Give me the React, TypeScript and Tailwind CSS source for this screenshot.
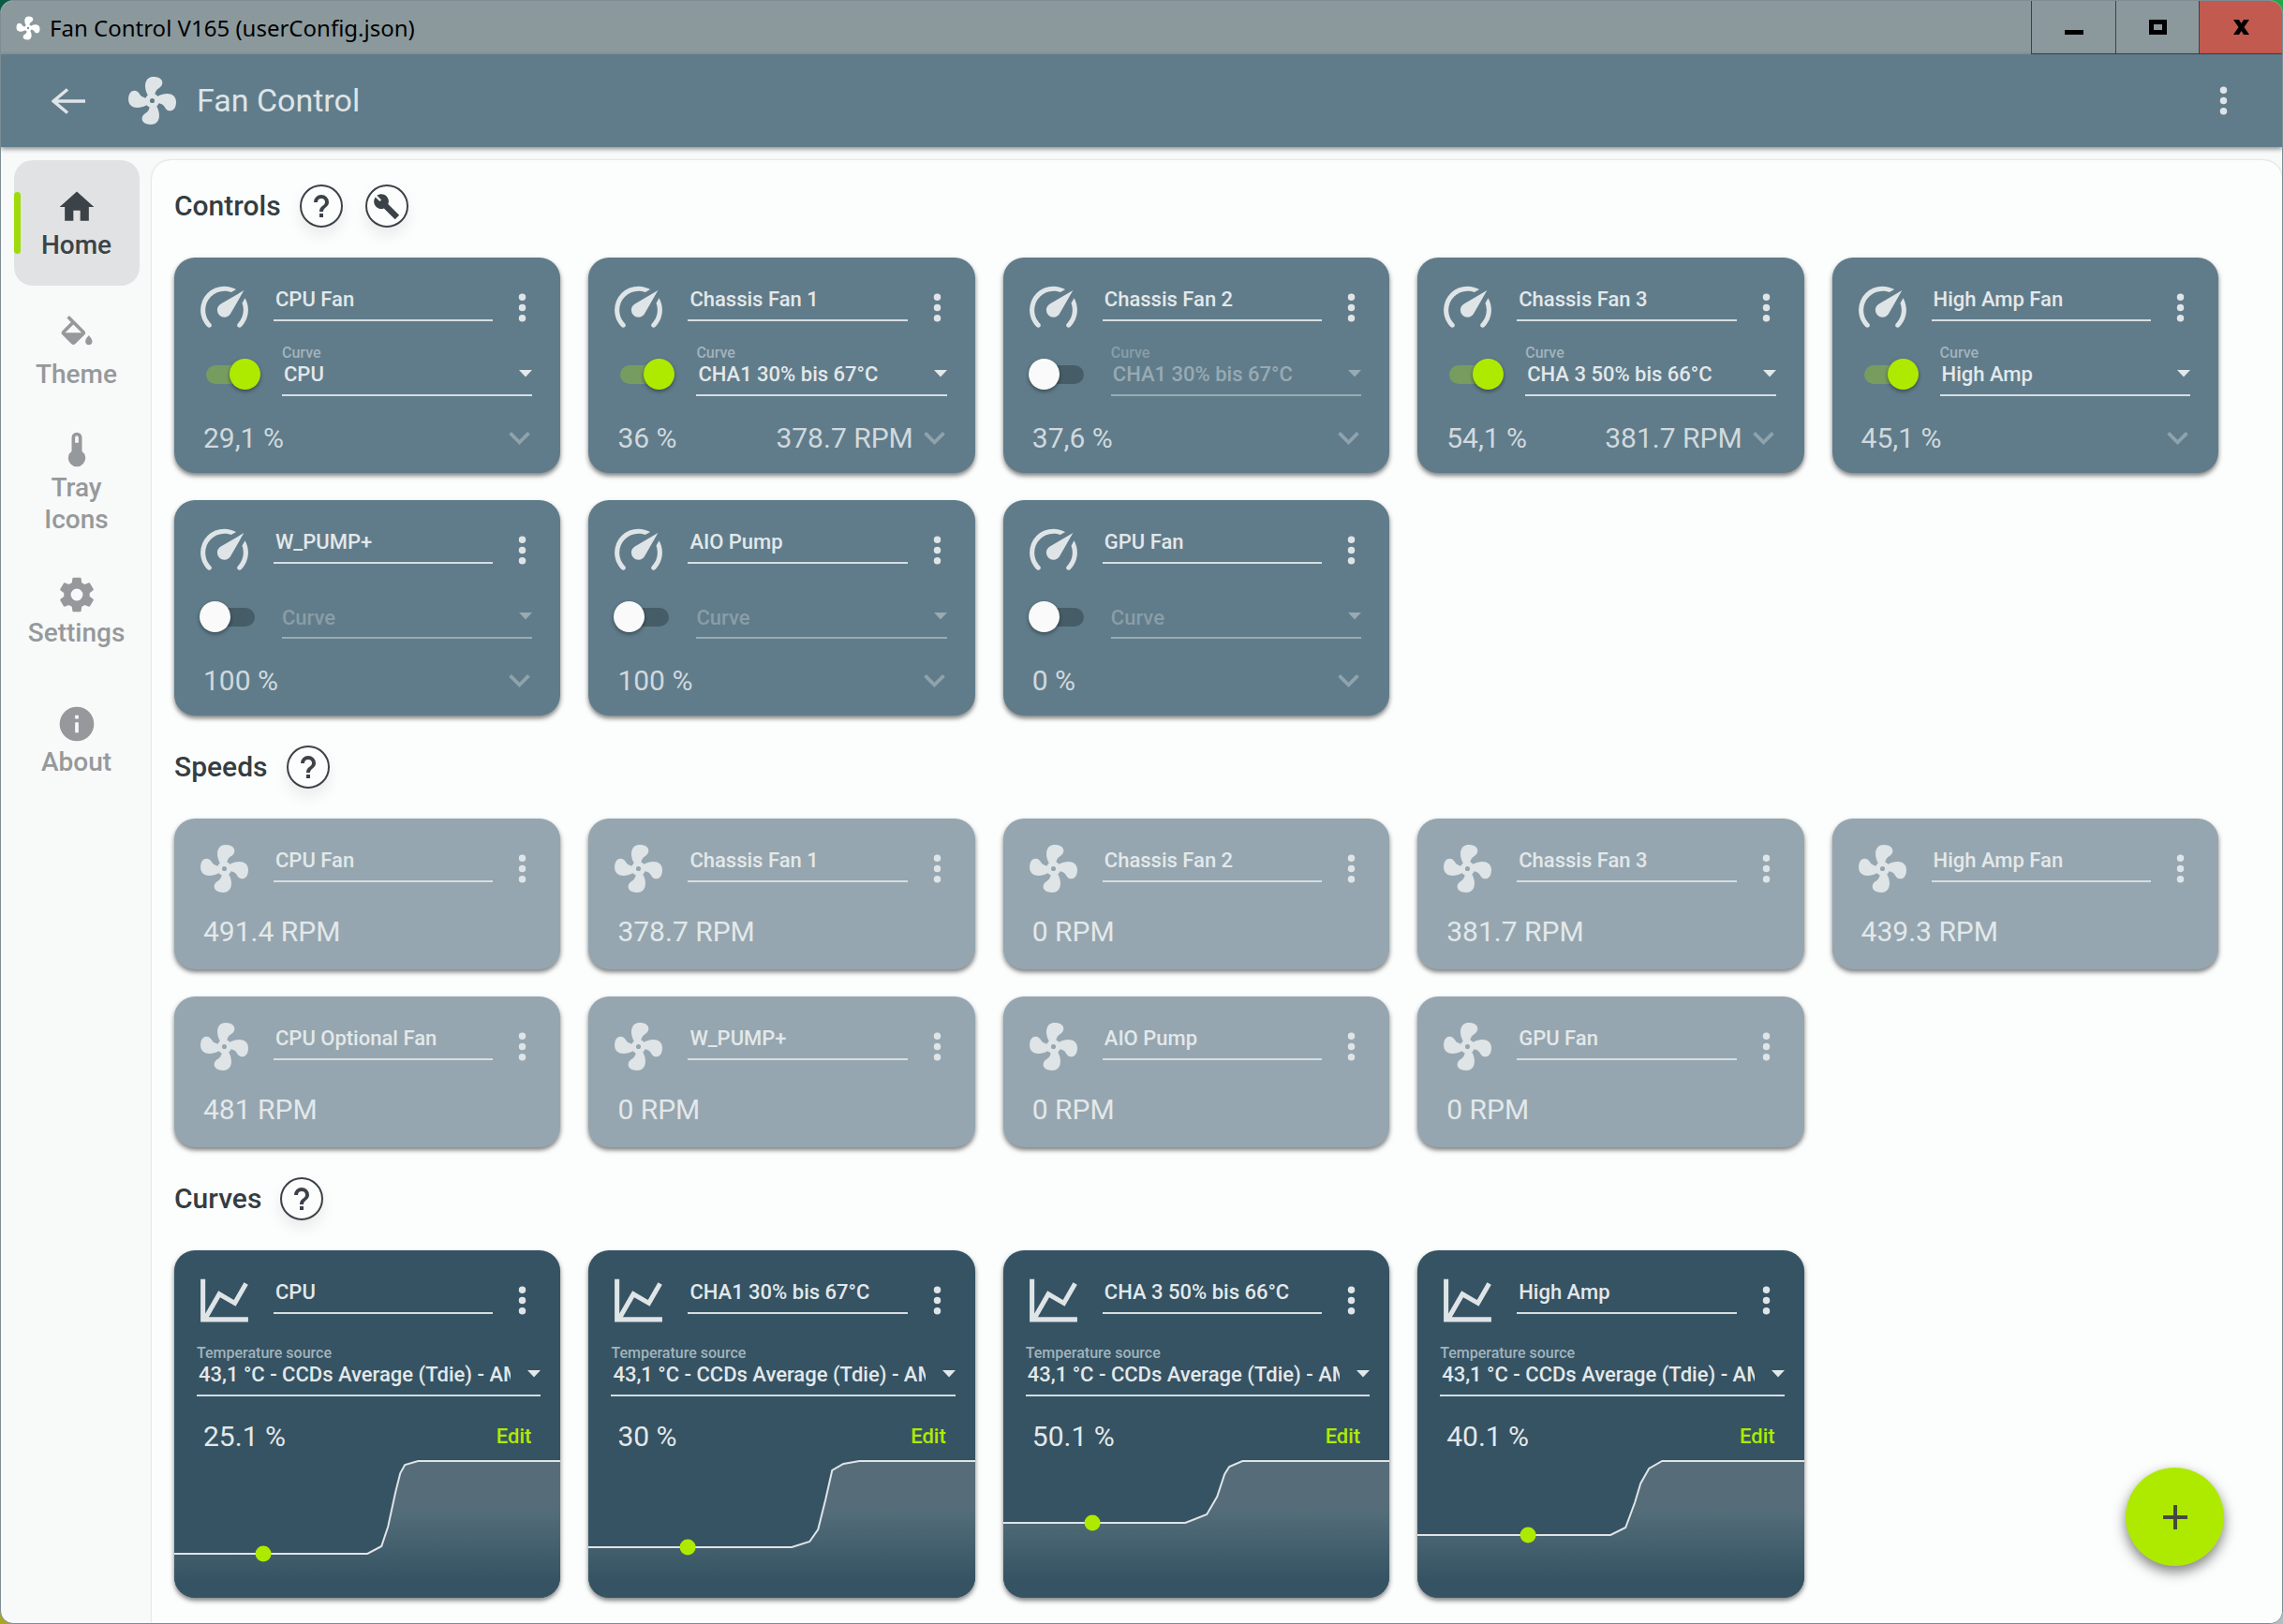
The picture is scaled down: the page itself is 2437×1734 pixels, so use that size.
import { useId, useState } from 'react';
import type { ReactNode } from 'react';
import { clsx } from 'clsx';

const ICONS = {
  home: 'M10,20V14H14V20H19V12H22L12,3L2,12H5V20H10Z',
  fill: 'M19,11.5C19,11.5 17,13.67 17,15A2,2 0 0,0 19,17A2,2 0 0,0 21,15C21,13.67 19,11.5 19,11.5M5.21,10L10,5.21L14.79,10M16.56,8.94L7.62,0L6.21,1.41L8.59,3.79L3.44,8.94C2.85,9.5 2.85,10.47 3.44,11.06L8.94,16.56C9.23,16.85 9.62,17 10,17C10.38,17 10.77,16.85 11.06,16.56L16.56,11.06C17.15,10.47 17.15,9.5 16.56,8.94Z',
  thermometer: 'M15 13V5A3 3 0 0 0 9 5V13A5 5 0 1 0 15 13M12 4A1 1 0 0 1 13 5V8H11V5A1 1 0 0 1 12 4Z',
  cog: 'M12,15.5A3.5,3.5 0 0,1 8.5,12A3.5,3.5 0 0,1 12,8.5A3.5,3.5 0 0,1 15.5,12A3.5,3.5 0 0,1 12,15.5M19.43,12.97C19.47,12.65 19.5,12.33 19.5,12C19.5,11.67 19.47,11.34 19.43,11L21.54,9.37C21.73,9.22 21.78,8.95 21.66,8.73L19.66,5.27C19.54,5.05 19.27,4.96 19.05,5.05L16.56,6.05C16.04,5.66 15.5,5.32 14.87,5.07L14.5,2.42C14.46,2.18 14.25,2 14,2H10C9.75,2 9.54,2.18 9.5,2.42L9.13,5.07C8.5,5.32 7.96,5.66 7.44,6.05L4.95,5.05C4.73,4.96 4.46,5.05 4.34,5.27L2.34,8.73C2.21,8.95 2.27,9.22 2.46,9.37L4.57,11C4.53,11.34 4.5,11.67 4.5,12C4.5,12.33 4.53,12.65 4.57,12.97L2.46,14.63C2.27,14.78 2.21,15.05 2.34,15.27L4.34,18.73C4.46,18.95 4.73,19.03 4.95,18.95L7.44,17.94C7.96,18.34 8.5,18.68 9.13,18.93L9.5,21.58C9.54,21.82 9.75,22 10,22H14C14.25,22 14.46,21.82 14.5,21.58L14.87,18.93C15.5,18.67 16.04,18.34 16.56,17.94L19.05,18.95C19.27,19.03 19.54,18.95 19.66,18.73L21.66,15.27C21.78,15.05 21.73,14.78 21.54,14.63L19.43,12.97Z',
  info: 'M13,9H11V7H13M13,17H11V11H13M12,2A10,10 0 0,0 2,12A10,10 0 0,0 12,22A10,10 0 0,0 22,12A10,10 0 0,0 12,2Z',
  gauge: 'M12,16A3,3 0 0,1 9,13C9,11.88 9.61,10.9 10.5,10.39L20.21,4.77L14.68,14.35C14.18,15.33 13.17,16 12,16M12,3C13.81,3 15.5,3.5 16.97,4.32L14.87,5.53C14,5.19 13,5 12,5A8,8 0 0,0 4,13C4,15.21 4.89,17.21 6.34,18.65H6.35C6.74,19.04 6.74,19.67 6.35,20.06C5.96,20.45 5.32,20.45 4.93,20.07V20.07C3.12,18.26 2,15.76 2,13A10,10 0 0,1 12,3M22,13C22,15.76 20.88,18.26 19.07,20.07V20.07C18.68,20.45 18.05,20.45 17.66,20.06C17.27,19.67 17.27,19.04 17.66,18.65V18.65C19.11,17.2 20,15.21 20,13C20,12 19.81,11 19.46,10.1L20.67,8C21.5,9.5 22,11.18 22,13Z',
  fan: 'M12,11A1,1 0 0,0 11,12A1,1 0 0,0 12,13A1,1 0 0,0 13,12A1,1 0 0,0 12,11M12.5,2C17,2 17.11,5.57 14.75,6.75C13.76,7.24 13.32,8.29 13.13,9.22C13.61,9.42 14.03,9.73 14.35,10.13C18.05,8.13 22.03,8.92 22.03,12.5C22.03,17 18.46,17.1 17.28,14.73C16.78,13.74 15.72,13.3 14.79,13.11C14.59,13.59 14.28,14 13.88,14.34C15.87,18.03 15.08,22 11.5,22C7,22 6.91,18.42 9.27,17.24C10.25,16.75 10.69,15.71 10.89,14.79C10.4,14.59 9.97,14.27 9.65,13.87C5.96,15.85 2,15.07 2,11.5C2,7 5.56,6.89 6.74,9.26C7.24,10.25 8.29,10.68 9.22,10.87C9.41,10.39 9.73,9.97 10.14,9.65C8.15,5.96 8.94,2 12.5,2Z',
  chart: 'M16,11.78L20.24,4.45L21.97,5.45L16.74,14.5L10.23,10.75L5.46,19H22V21H2V3H4V17.54L9.5,8L16,11.78Z',
  dots: 'M12,16A2,2 0 0,1 14,18A2,2 0 0,1 12,20A2,2 0 0,1 10,18A2,2 0 0,1 12,16M12,10A2,2 0 0,1 14,12A2,2 0 0,1 12,14A2,2 0 0,1 10,12A2,2 0 0,1 12,10M12,4A2,2 0 0,1 14,6A2,2 0 0,1 12,8A2,2 0 0,1 10,6A2,2 0 0,1 12,4Z',
  chevron: 'M7.41,8.58L12,13.17L16.59,8.58L18,10L12,16L6,10L7.41,8.58Z',
  help: 'M11,18H13V16H11V18M12,6A4,4 0 0,0 8,10H10A2,2 0 0,1 12,8A2,2 0 0,1 14,10C14,12 11,11.75 11,15H13C13,12.75 16,12.5 16,10A4,4 0 0,0 12,6Z',
  wrench: 'M23.3,19.7L13.53,9.91C14.46,7.57 14,4.81 12.09,2.91C9.79,0.61 6.21,0.4 3.66,2.26L7.5,6.11L6.08,7.52L2.25,3.69C0.39,6.23 0.6,9.82 2.9,12.11C4.76,13.97 7.47,14.46 9.79,13.59L19.6,23.4Z',
};

type IconName = keyof typeof ICONS;

const NAV: { label: string; icon: IconName }[] = [
  { label: 'Home', icon: 'home' },
  { label: 'Theme', icon: 'fill' },
  { label: 'Tray Icons', icon: 'thermometer' },
  { label: 'Settings', icon: 'cog' },
  { label: 'About', icon: 'info' },
];

type Control = { name: string; curve?: string; on: boolean; percent: string; rpm?: string };

const CONTROLS: Control[] = [
  { name: 'CPU Fan', curve: 'CPU', on: true, percent: '29,1 %' },
  { name: 'Chassis Fan 1', curve: 'CHA1 30% bis 67°C', on: true, percent: '36 %', rpm: '378.7 RPM' },
  { name: 'Chassis Fan 2', curve: 'CHA1 30% bis 67°C', on: false, percent: '37,6 %' },
  { name: 'Chassis Fan 3', curve: 'CHA 3 50% bis 66°C', on: true, percent: '54,1 %', rpm: '381.7 RPM' },
  { name: 'High Amp Fan', curve: 'High Amp', on: true, percent: '45,1 %' },
  { name: 'W_PUMP+', on: false, percent: '100 %' },
  { name: 'AIO Pump', on: false, percent: '100 %' },
  { name: 'GPU Fan', on: false, percent: '0 %' },
];

const SPEEDS = [
  { name: 'CPU Fan', rpm: '491.4 RPM' },
  { name: 'Chassis Fan 1', rpm: '378.7 RPM' },
  { name: 'Chassis Fan 2', rpm: '0 RPM' },
  { name: 'Chassis Fan 3', rpm: '381.7 RPM' },
  { name: 'High Amp Fan', rpm: '439.3 RPM' },
  { name: 'CPU Optional Fan', rpm: '481 RPM' },
  { name: 'W_PUMP+', rpm: '0 RPM' },
  { name: 'AIO Pump', rpm: '0 RPM' },
  { name: 'GPU Fan', rpm: '0 RPM' },
];

const SOURCE = '43,1 °C - CCDs Average (Tdie) - AMD';

type Curve = { name: string; percent: string; line: string; dot: [number, number] };

const CURVES: Curve[] = [
  {
    name: 'CPU',
    percent: '25.1 %',
    line: 'M0,109H206L221,101L228,80L236,43L241,23L246,14L260,10H413',
    dot: [95, 109],
  },
  {
    name: 'CHA1 30% bis 67°C',
    percent: '30 %',
    line: 'M0,102H217L236,96L245,83L253,51L260,20L272,13L289,10H413',
    dot: [106, 102],
  },
  {
    name: 'CHA 3 50% bis 66°C',
    percent: '50.1 %',
    line: 'M0,76H194L217,67L228,48L236,24L241,16L255,10H413',
    dot: [95, 76],
  },
  {
    name: 'High Amp',
    percent: '40.1 %',
    line: 'M0,89H206L222,81L232,54L238,34L247,18L261,10H413',
    dot: [118, 89],
  },
];

function Icon({ name, className }: { name: IconName; className?: string }) {
  return (
    <svg viewBox="0 0 24 24" fill="currentColor" aria-hidden="true" className={clsx('shrink-0', className)}>
      <path d={ICONS[name]} />
    </svg>
  );
}

function TitleBar() {
  return (
    <div className="flex h-[57px] items-stretch justify-between bg-[#8b999d] text-black">
      <div className="flex items-center gap-2 pl-3.5">
        <Icon name="fan" className="size-[30px] text-white" />
        <span className="font-['Noto_Sans',sans-serif] text-2xl">Fan Control V165 (userConfig.json)</span>
      </div>
      <div className="flex">
        <button type="button" aria-label="Minimize" className="flex w-[90px] items-center justify-center border-b border-l border-[#3c4245]">
          <svg viewBox="0 0 20 16" className="h-4 w-5"><path d="M0 11H20V16H0Z" /></svg>
        </button>
        <button type="button" aria-label="Maximize" className="flex w-[89px] items-center justify-center border-b border-l border-[#3c4245]">
          <svg viewBox="0 0 19 16" className="h-4 w-[19px]"><path d="M0 0H19V16H0ZM5 5V11H14V5Z" fillRule="evenodd" /></svg>
        </button>
        <button type="button" aria-label="Close" className="flex w-[89px] items-center justify-center border-b border-l border-[#3c4245] bg-[#c25a50]">
          <svg viewBox="0 0 17 16" className="h-4 w-[17px]">
            <path d="M0 0H6L8.500 4L11 0H17L11.500 8L17 16H11L8.500 12L6 16H0L5.500 8Z" />
          </svg>
        </button>
      </div>
    </div>
  );
}

function AppBar() {
  return (
    <header className="relative z-10 flex h-[99px] items-center bg-[#607c8a] pr-10 pl-[46px] text-[#dfe4e7] shadow-[0_2px_5px_rgba(0,0,0,0.45)]">
      <button type="button" aria-label="Back" className="flex size-[52px] items-center justify-center">
        <svg viewBox="0 0 36 28" fill="none" stroke="currentColor" strokeWidth="3.500" className="h-7 w-9">
          <path d="M36 14H2M17 1.500L2 14L17 26.500" />
        </svg>
      </button>
      <Icon name="fan" className="ml-[33px] size-[61px]" />
      <h1 className="ml-[17px] text-[34px]">Fan Control</h1>
      <button type="button" aria-label="Menu" className="ml-auto">
        <Icon name="dots" className="size-[45px]" />
      </button>
    </header>
  );
}

function SideNav() {
  return (
    <nav className="flex w-[161px] shrink-0 flex-col items-center gap-1 pt-3.5">
      {NAV.map((item, i) => (
        <a
          key={item.label}
          href={`#${item.label}`}
          className={clsx(
            'relative flex h-[134px] w-[134px] flex-col items-center justify-center rounded-[20px] pt-0.5 text-center text-[28px] leading-[34px] font-medium',
            i === 0 ? 'bg-[#e1e2e3] text-[#3b4348]' : 'text-[#96999b]',
          )}
        >
          {i === 0 && <span className="absolute inset-y-[34px] left-0 w-[7px] rounded-full bg-[#9fdb0a]" />}
          <Icon name={item.icon} className="size-11" />
          <span className="w-[104px] pt-0.5">{item.label}</span>
        </a>
      ))}
    </nav>
  );
}

function RoundButton({ label, icon, iconSize }: { label: string; icon: IconName; iconSize: string }) {
  return (
    <button
      type="button"
      aria-label={label}
      className="flex size-[46px] items-center justify-center rounded-full border-2 border-[#3b4348] text-[#3b4348] shadow-[0_8px_16px_rgba(0,0,0,0.08)]"
    >
      <Icon name={icon} className={iconSize} />
    </button>
  );
}

function Section({ title, tools, children }: { title: string; tools?: boolean; children: ReactNode }) {
  return (
    <section>
      <div className="mb-8 flex items-center gap-5">
        <h2 className="text-[30px] leading-[46px] font-medium text-[#343d42]">{title}</h2>
        <div className="flex gap-6">
          <RoundButton label={`${title} help`} icon="help" iconSize="size-[48px]" />
          {tools && <RoundButton label="Assisted setup" icon="wrench" iconSize="size-[29px]" />}
        </div>
      </div>
      <div className="grid grid-cols-5 gap-x-[30px] gap-y-[29px]">{children}</div>
    </section>
  );
}

function Card({ className, children }: { className: string; children: ReactNode }) {
  return (
    <article className={clsx('overflow-hidden rounded-[22px] pt-[23px] text-[#e3e8ea] shadow-[0_3px_5px_rgba(0,0,0,0.5)]', className)}>
      {children}
    </article>
  );
}

function CardHeader({ name, icon }: { name: string; icon: IconName }) {
  return (
    <div className="flex h-[61px] pr-[18px] pl-[23px]">
      <Icon name={icon} className="size-[61px] text-[#dfe4e7]" />
      <input
        aria-label="Name"
        defaultValue={name}
        className="ml-[22px] h-[45px] min-w-0 flex-1 border-b-2 border-[#d6dde1] bg-transparent px-0.5 text-[22px] font-medium outline-none"
      />
      <button type="button" aria-label={`${name} menu`} className="ml-[9px]">
        <Icon name="dots" className="size-[45px] text-[#dfe4e7]" />
      </button>
    </div>
  );
}

function SelectField({ label, value, disabled, className }: { label: string; value?: string; disabled?: boolean; className?: string }) {
  const id = useId();
  return (
    <div className={clsx('relative min-w-0', disabled && 'text-[#98aab3]', className)}>
      {/* with nothing selected the label drops down and acts as the placeholder */}
      <label
        htmlFor={id}
        className={clsx(
          'block font-medium',
          value ? 'h-5 text-base leading-5' : 'pointer-events-none absolute bottom-2.5 left-0 text-[22px] leading-6',
          disabled ? 'text-[#8a9da8]' : 'text-[#a3b3bc]',
        )}
      >
        {label}
      </label>
      <select
        id={id}
        disabled={disabled}
        className={clsx(
          'block h-9 w-full appearance-none border-b-2 bg-transparent pr-8 pb-2 pl-0.5 text-[22px] leading-6 font-medium opacity-100 outline-none',
          disabled ? 'border-[#9aabb4]' : 'border-[#d6dde1]',
        )}
      >
        <option>{value}</option>
      </select>
      <svg viewBox="0 0 14 8" fill="currentColor" aria-hidden="true" className="pointer-events-none absolute right-0 bottom-5 h-2 w-3.5">
        <path d="M0 0H14L7 7.500Z" />
      </svg>
    </div>
  );
}

function Toggle({ on, label }: { on: boolean; label: string }) {
  const [checked, setChecked] = useState(on);
  return (
    <span className="relative ml-1 flex h-[34px] w-[66px] shrink-0 items-center">
      <input
        type="checkbox"
        role="switch"
        aria-label={label}
        checked={checked}
        onChange={(e) => setChecked(e.target.checked)}
        className="peer mx-[7px] h-5 w-[52px] appearance-none rounded-full bg-[#465d68] checked:bg-[#779c60]"
      />
      <span className="pointer-events-none absolute top-0 left-0 size-[33px] rounded-full bg-[#fafafa] shadow-[0_2px_4px_rgba(0,0,0,0.4)] peer-checked:left-8 peer-checked:bg-[#aeea00]" />
    </span>
  );
}

function ControlCard({ item }: { item: Control }) {
  return (
    <Card className="bg-[#607c8a]">
      <CardHeader name={item.name} icon="gauge" />
      <div className="mt-2 flex h-14 items-end pr-[30px] pl-[23px]">
        <div className="mb-1.5">
          <Toggle on={item.on} label={`${item.name} enabled`} />
        </div>
        <SelectField label="Curve" value={item.curve} disabled={!item.on} className="ml-[22px] flex-1" />
      </div>
      <div className="mt-[22px] mb-[15px] flex h-[45px] items-center pr-[21px] pl-[31px] text-[30px] text-[#d0d9de]">
        <span>{item.percent}</span>
        <span className="ml-auto">{item.rpm}</span>
        <button type="button" aria-label="Expand">
          <Icon name="chevron" className="size-[45px] text-[#8fa3ad]" />
        </button>
      </div>
    </Card>
  );
}

function SpeedCard({ name, rpm }: { name: string; rpm: string }) {
  return (
    <Card className="bg-[#95a6b0]">
      <CardHeader name={name} icon="fan" />
      <div className="mt-3.5 mb-[18px] flex h-[45px] items-center pl-[31px] text-[30px]">{rpm}</div>
    </Card>
  );
}

function CurveCard({ curve }: { curve: Curve }) {
  const id = useId();
  return (
    <Card className="bg-[#355363]">
      <CardHeader name={curve.name} icon="chart" />
      <SelectField label="Temperature source" value={SOURCE} className="mt-4 mr-[21px] ml-6" />
      <div className="mt-[22px] flex h-10 items-center justify-between px-[31px]">
        <span className="text-[30px]">{curve.percent}</span>
        <button type="button" className="text-[22px] font-medium text-[#aeea00]">
          Edit
        </button>
      </div>
      <svg viewBox="0 3 412 153" preserveAspectRatio="none" aria-hidden="true" className="block h-[153px] w-full">
        <defs>
          <linearGradient id={id} gradientUnits="userSpaceOnUse" x1="0" y1="58" x2="0" y2="138">
            <stop offset="0" stopColor="#566d79" />
            <stop offset="0.100" stopColor="#526c78" />
            <stop offset="1" stopColor="#355363" />
          </linearGradient>
        </defs>
        <path d={`${curve.line}V156H0Z`} fill={`url(#${id})`} />
        <path d={curve.line} fill="none" stroke="#dfe4e7" strokeWidth="2" />
        <circle cx={curve.dot[0]} cy={curve.dot[1]} r="8.500" fill="#aeea00" />
      </svg>
    </Card>
  );
}

export default function App() {
  return (
    <div className="flex min-h-screen bg-[conic-gradient(#1fa848_25%,#b3bcc0_25%_50%,#a8a52a_50%_75%,#0b5b44_75%)] font-[Roboto,sans-serif]">
      <div className="relative flex flex-1 flex-col overflow-hidden rounded-[14px] border border-[#7d8d93] bg-[#f8f9f9]">
        <TitleBar />
        <AppBar />
        <div className="flex flex-1">
          <SideNav />
          <main className="mt-3.5 flex min-w-0 flex-1 flex-col gap-8 rounded-t-[20px] bg-[#fcfdfd] pt-[26px] pr-[68px] pb-6 pl-6 shadow-[0_0_2px_rgba(0,0,0,0.25)]">
            <Section title="Controls" tools>
              {CONTROLS.map((item) => (
                <ControlCard key={item.name} item={item} />
              ))}
            </Section>
            <Section title="Speeds">
              {SPEEDS.map((item) => (
                <SpeedCard key={item.name} {...item} />
              ))}
            </Section>
            <Section title="Curves">
              {CURVES.map((curve) => (
                <CurveCard key={curve.name} curve={curve} />
              ))}
            </Section>
          </main>
        </div>
        <button
          type="button"
          aria-label="Add"
          className="fixed right-[63px] bottom-[62px] flex size-[105px] items-center justify-center rounded-full bg-[#aeea00] text-[#454b3c] shadow-[0_6px_14px_rgba(0,0,0,0.5)]"
        >
          <svg viewBox="0 0 26 26" stroke="currentColor" strokeWidth="4" className="size-[26px]">
            <path d="M13 0V26M0 13H26" />
          </svg>
        </button>
      </div>
    </div>
  );
}
